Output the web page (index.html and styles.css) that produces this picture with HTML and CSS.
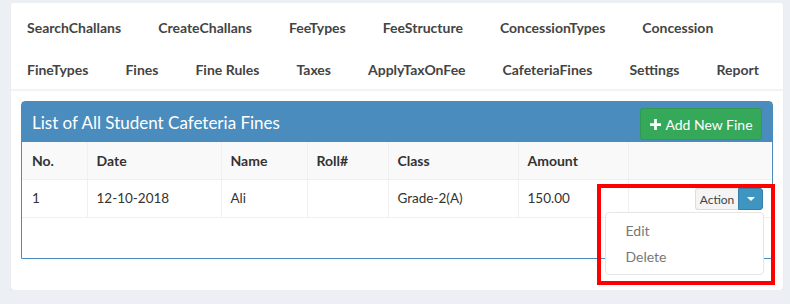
FILE: index.html
```html
<!DOCTYPE html>
<html lang="en">
<head>
<meta charset="utf-8">
<title>Cafeteria Fines</title>
<link rel="stylesheet" href="styles.css">
</head>
<body>
<div class="box">
  <ul class="nav">
    <li>SearchChallans</li>
    <li>CreateChallans</li>
    <li>FeeTypes</li>
    <li>FeeStructure</li>
    <li>ConcessionTypes</li>
    <li>Concession</li>
    <li>FineTypes</li>
    <li>Fines</li>
    <li>Fine Rules</li>
    <li>Taxes</li>
    <li>ApplyTaxOnFee</li>
    <li>CafeteriaFines</li>
    <li>Settings</li>
    <li>Report</li>
  </ul>
  <div class="panel">
    <div class="panel-head">
      <h3 class="panel-title">List of All Student Cafeteria Fines</h3>
      <button class="btn-add"><svg class="plus" viewBox="0 0 12 12" width="11" height="11"><path d="M4.5 0h3v4.5H12v3H7.5V12h-3V7.5H0v-3h4.5z" fill="#fff"/></svg><span>Add New Fine</span></button>
    </div>
    <table class="grid">
      <colgroup>
        <col class="c-no"><col class="c-date"><col class="c-name"><col class="c-roll"><col class="c-class"><col class="c-amt"><col class="c-act">
      </colgroup>
      <thead>
        <tr><th>No.</th><th>Date</th><th>Name</th><th>Roll#</th><th>Class</th><th>Amount</th><th></th></tr>
      </thead>
      <tbody>
        <tr>
          <td>1</td><td>12-10-2018</td><td>Ali</td><td></td><td>Grade-2(A)</td><td>150.00</td>
          <td class="act">
            <div class="btn-group">
              <button class="btn-action">Action</button><button class="btn-caret"><span class="caret"></span></button>
            </div>
            <ul class="menu">
              <li>Edit</li>
              <li>Delete</li>
            </ul>
            <div class="highlight"></div>
          </td>
        </tr>
      </tbody>
    </table>
  </div>
</div>
</body>
</html>
```
FILE: styles.css
```css
* { box-sizing: border-box; }
html, body { margin: 0; }
body {
  background: #ecf0f5;
  font-family: "Lato", "Open Sans", sans-serif;
  font-size: 14px;
  color: #333;
  padding: 3px 7px 0 11px;
}
.box {
  background: #fff;
  border-radius: 3px;
  box-shadow: 0 1px 1px rgba(0,0,0,0.1);
  height: 287px;
  padding: 0 10px;
}
.nav {
  list-style: none;
  margin: 0 -10px;
  padding: 15px 16px 10px;
  display: flex;
  flex-wrap: wrap;
  column-gap: 37px;
  row-gap: 23px;
  border-bottom: 2px solid #f2f3f5;
}
.nav li {
  font-weight: bold;
  color: #444;
  line-height: 19px;
  font-size: 14px;
}
.panel {
  margin-top: 10px;
  border: 1px solid #4a8cbe;
  border-radius: 4px 4px 0 0;
  padding-bottom: 40px;
}
.panel-head {
  background: #4a8cbe;
  height: 40px;
  display: flex;
  justify-content: space-between;
  align-items: flex-start;
  padding: 5px 10px 0;
}
.panel-title {
  margin: 0;
  font-weight: normal;
  color: #fff;
  font-size: 17px;
  line-height: 30px;
  padding-top: 1px;
}
.btn-add {
  background: #35a85a;
  border: 1px solid #2f9a52;
  border-radius: 3px;
  color: #fff;
  font-family: inherit;
  font-size: 14px;
  height: 32px;
  width: 122px;
  padding: 0 0 0 1px;
  margin-top: 1px;
  display: flex;
  align-items: center;
  justify-content: center;
  gap: 4px;
  white-space: nowrap;
}
.plus { display: block; }
.grid {
  width: 100%;
  border-collapse: collapse;
  table-layout: fixed;
}
.c-no { width: 65px; }
.c-date { width: 134px; }
.c-name { width: 86px; }
.c-roll { width: 81px; }
.c-class { width: 130px; }
.c-amt { width: 110px; }
.grid th, .grid td {
  text-align: left;
  padding: 9px 8px 9px 9px;
  line-height: 19px;
  border-bottom: 1px solid #f0f0f0;
  border-left: 1px solid #f0f0f0;
}
.grid td { font-size: 13.5px; }
.grid th:first-child, .grid td:first-child { border-left: 0; padding-left: 10px; }
.grid thead th {
  background: #f9f9f9;
  font-weight: bold;
  color: #333;
}
.grid td.act {
  position: relative;
  padding: 8px 9px 7px 8px;
}
.btn-group {
  display: flex;
  justify-content: flex-end;
}
.btn-action {
  font-family: inherit;
  font-size: 12px;
  color: #444;
  background: #f4f4f4;
  border: 1px solid #ddd;
  border-right: 0;
  border-radius: 3px 0 0 3px;
  height: 22px;
  width: 43px;
  padding: 0;
}
.btn-caret {
  background: #3d95c0;
  border: 1px solid #367fa9;
  border-radius: 0 3px 3px 0;
  height: 22px;
  width: 25px;
  padding: 0;
  display: flex;
  align-items: center;
  justify-content: center;
}
.caret {
  width: 0;
  height: 0;
  border-left: 4px solid transparent;
  border-right: 4px solid transparent;
  border-top: 4px solid #fff;
}
.menu {
  position: absolute;
  left: -24px;
  top: 32px;
  width: 159px;
  height: 63px;
  margin: 0;
  list-style: none;
  padding: 5px 0 0;
  background: #fff;
  border: 1px solid #e6e6e6;
  border-radius: 4px;
  z-index: 2;
}
.menu li {
  padding: 0 20px;
  line-height: 26px;
  color: #777;
  font-size: 14px;
}
.highlight {
  position: absolute;
  left: -32px;
  top: 4px;
  width: 178px;
  height: 101px;
  border: 4px solid #ff0000;
  z-index: 3;
  pointer-events: none;
}
```
